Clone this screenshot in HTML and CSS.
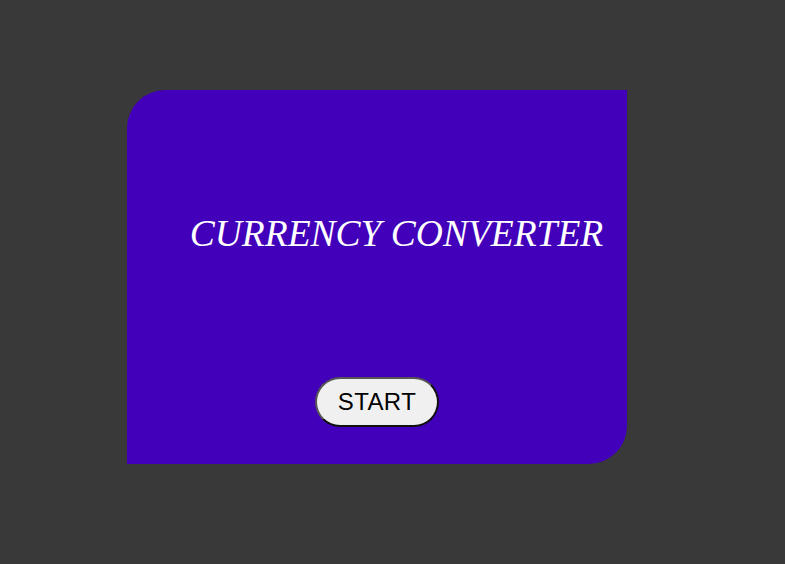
FILE: index.html
```html
<!DOCTYPE html>
<html>
<head>
<meta charset="utf-8">
<link rel="stylesheet" href="styles.css">
</head>
<body>
<main class="card">
  <h1 class="title">CURRENCY CONVERTER</h1>
  <button class="start">START</button>
</main>
</body>
</html>
```
FILE: styles.css
```css
html, body {
  margin: 0;
  padding: 0;
}
body {
  background: #393939;
  width: 785px;
  height: 564px;
  padding: 90px 0 0 127px;
  box-sizing: border-box;
}
.card {
  width: 500px;
  height: 374px;
  background: #4200bb;
  border-radius: 38px 0 38px 0;
  display: flex;
  flex-direction: column;
  align-items: center;
  box-sizing: border-box;
  padding-top: 122px;
}
.title {
  margin: 0 0 0 39px;
  font-family: "Liberation Serif", "Times New Roman", serif;
  font-style: italic;
  font-weight: normal;
  font-size: 37.5px;
  line-height: 44px;
  color: #ffffff;
  white-space: nowrap;
}
.start {
  margin-top: 121px;
  width: 124px;
  height: 50px;
  border-radius: 25px;
  background: #f0f0f0;
  border: 2px solid #111;
  border-top-color: #555;
  border-left-color: #555;
  font-family: "Liberation Sans", Arial, sans-serif;
  font-size: 24px;
  letter-spacing: 0.4px;
  color: #000;
  padding: 0;
}
```
